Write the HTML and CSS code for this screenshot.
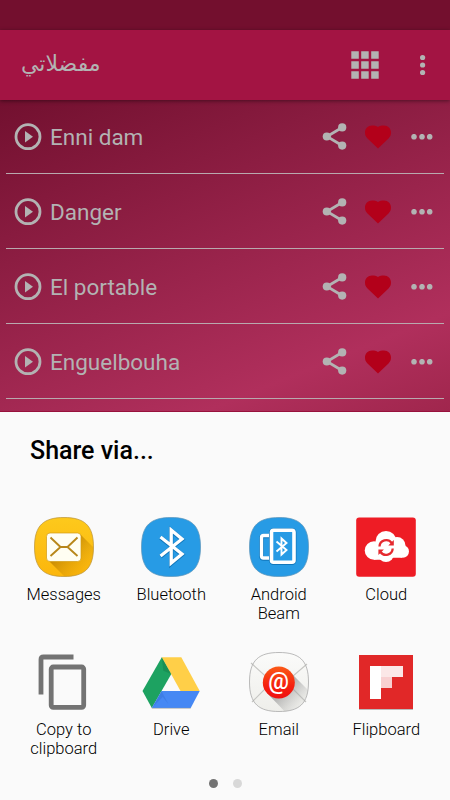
FILE: index.html
```html
<!DOCTYPE html>
<html lang="en">
<head>
<meta charset="utf-8">
<title>Share via</title>
<link rel="stylesheet" href="styles.css">
</head>
<body>
<svg class="defs" width="0" height="0" aria-hidden="true">
  <defs>
    <linearGradient id="yellow" x2="0" y2="1"><stop stop-color="#fdc91c"/><stop offset="1" stop-color="#fcb60c"/></linearGradient>
    <linearGradient id="shade" gradientUnits="userSpaceOnUse" x1="30" y1="30" x2="52" y2="52"><stop stop-color="#b57a00" stop-opacity=".75"/><stop offset="1" stop-color="#d99500" stop-opacity=".1"/></linearGradient>
    <linearGradient id="grey" gradientUnits="userSpaceOnUse" x1="34" y1="34" x2="52" y2="52"><stop stop-color="#888" stop-opacity=".7"/><stop offset="1" stop-color="#aaa" stop-opacity=".08"/></linearGradient>
    <linearGradient id="orange" x2="0" y2="1"><stop stop-color="#fb5a17"/><stop offset=".6" stop-color="#f5200f"/><stop offset="1" stop-color="#f01010"/></linearGradient>
    <linearGradient id="paper" x2="0" y2="1"><stop stop-color="#fbfbfa"/><stop offset="1" stop-color="#eeeeea"/></linearGradient>
    <path id="tile" d="M30 .5C50 .5 59.5 8 59.5 30S50 59.5 30 59.5 .5 52 .5 30 10 .5 30 .5z"/>
    <clipPath id="tileclip"><use href="#tile"/></clipPath>
    <symbol id="play" viewBox="0 0 28 28"><circle cx="14" cy="13.700" r="12" fill="none" stroke="currentColor" stroke-width="2.800"/><path d="M11 7.900v11.600l8-5.800z" fill="currentColor"/></symbol>
    <symbol id="share" viewBox="0 0 26 28"><path d="M20 4.500 5 13.500l15 9" fill="none" stroke="currentColor" stroke-width="2.700"/><circle cx="20.200" cy="4.400" r="4.100" fill="currentColor"/><circle cx="4.800" cy="13.500" r="4.100" fill="currentColor"/><circle cx="20.200" cy="22.600" r="4.100" fill="currentColor"/></symbol>
    <symbol id="heart" viewBox="0 0 26 24"><path d="M13 23.600 2.500 13.600C.7 11.600 0 9.800 0 7.500 0 3.400 3 .5 7 .5c2.400 0 4.400.3 6 1.400C14.600.8 16.600.5 19 .5c4 0 7 2.900 7 7 0 2.300-.7 4.100-2.500 6.100z" fill="#b3001a"/></symbol>
    <symbol id="more" viewBox="0 0 22 6"><circle cx="3" cy="2.700" r="2.800" fill="currentColor"/><circle cx="11" cy="2.700" r="2.800" fill="currentColor"/><circle cx="18.700" cy="2.700" r="2.800" fill="currentColor"/></symbol>
  </defs>
</svg>
<div class="status"></div>
<header class="bar">
  <h1 class="title" dir="rtl" lang="ar">مفضلاتي</h1>
  <svg class="apps" viewBox="0 0 28 28"><path d="M.3.3h7.500v7.500H.3zM10.200.3h7.500v7.500h-7.500zM20.200.3h7.500v7.500h-7.500zM.3 10.200h7.500v7.500H.3zM10.200 10.200h7.500v7.500h-7.500zM20.200 10.200h7.500v7.500h-7.500zM.3 20.200h7.500v7.500H.3zM10.200 20.200h7.500v7.500h-7.500zM20.200 20.200h7.500v7.500h-7.500z" fill="currentColor"/></svg>
  <svg class="menu" viewBox="0 0 6 22"><circle cx="2.600" cy="3.500" r="2.600" fill="currentColor"/><circle cx="2.600" cy="11" r="2.600" fill="currentColor"/><circle cx="2.600" cy="18.500" r="2.600" fill="currentColor"/></svg>
</header>
<main class="songs">
  <div class="song"><svg class="play"><use href="#play"/></svg><span class="name">Enni dam</span><svg class="share"><use href="#share"/></svg><svg class="heart"><use href="#heart"/></svg><svg class="more"><use href="#more"/></svg></div>
  <div class="song"><svg class="play"><use href="#play"/></svg><span class="name">Danger</span><svg class="share"><use href="#share"/></svg><svg class="heart"><use href="#heart"/></svg><svg class="more"><use href="#more"/></svg></div>
  <div class="song"><svg class="play"><use href="#play"/></svg><span class="name">El portable</span><svg class="share"><use href="#share"/></svg><svg class="heart"><use href="#heart"/></svg><svg class="more"><use href="#more"/></svg></div>
  <div class="song"><svg class="play"><use href="#play"/></svg><span class="name">Enguelbouha</span><svg class="share"><use href="#share"/></svg><svg class="heart"><use href="#heart"/></svg><svg class="more"><use href="#more"/></svg></div>
</main>
<section class="sheet">
  <h2 class="heading">Share via...</h2>
  <div class="targets">
    <div class="target">
      <svg class="icon" viewBox="0 0 60 60">
        <use href="#tile" fill="url(#yellow)"/>
        <path clip-path="url(#tileclip)" d="M46 17 64 35v30H36L14 43z" fill="url(#shade)"/>
        <use href="#tile" fill="none" stroke="#b9923a" stroke-width=".7"/>
        <rect x="12.500" y="16" width="34.500" height="28.500" rx="3.500" fill="#fffef2" stroke="#d29b13" stroke-width=".7"/>
        <path d="M16.500 20.500 26.500 30h7l10-9.500M26.500 30l-10 9M33.500 30l10 9" fill="none" stroke="#b8871a" stroke-width="1.900"/>
      </svg>
      <span class="label">Messages</span>
    </div>
    <div class="target">
      <svg class="icon" viewBox="0 0 60 60">
        <use href="#tile" fill="#279be5" stroke="#5b93b8" stroke-width=".7"/>
        <path d="M19.500 20.500 41 37.500 30.200 46.500v-33L41 22.500 19.500 39.500" fill="none" stroke="#1277bb" stroke-width="4.400"/>
        <path d="M19.500 20 41 37 30.200 46v-33L41 22 19.500 39" fill="none" stroke="#fff" stroke-width="3.300"/>
      </svg>
      <span class="label">Bluetooth</span>
    </div>
    <div class="target">
      <svg class="icon" viewBox="0 0 60 60">
        <use href="#tile" fill="#279be5" stroke="#5b93b8" stroke-width=".7"/>
        <path d="M21 19h-6.500q-2 0-2 2v18.500q0 2 2 2H21" fill="none" stroke="#1277bb" stroke-width="4.500"/>
        <path d="M21 18.500h-6.500q-2 0-2 2V39q0 2 2 2H21" fill="none" stroke="#fff" stroke-width="3.300"/>
        <rect x="22.500" y="13.500" width="22.500" height="32" rx="2" fill="#279be5" stroke="#1277bb" stroke-width="5"/>
        <rect x="22.500" y="13.300" width="22.500" height="32" rx="2" fill="#279be5" stroke="#fff" stroke-width="3.600"/>
        <path d="m27.500 24.500 10 8.500-5 4.500V21.500l5 4.500-10 8.500" fill="none" stroke="#fff" stroke-width="1.900"/>
      </svg>
      <span class="label">Android<br>Beam</span>
    </div>
    <div class="target">
      <svg class="icon" viewBox="0 0 60 60">
        <rect x=".2" y=".5" width="59.600" height="59.300" rx="3" fill="#ee1c25"/>
        <g fill="#fff"><circle cx="18" cy="33.500" r="9.300"/><circle cx="30" cy="24.500" r="10.500"/><circle cx="41" cy="28.500" r="8.500"/><circle cx="46.800" cy="34.500" r="6.200"/><circle cx="30" cy="37" r="8"/><path d="M18 32h28v8.700H34l-4 2.500-4-.5h-8z"/></g>
        <path d="M23.500 29.500a6.700 6.700 0 0 1 12.200-3.500M36.700 31.500a6.700 6.700 0 0 1-12.200 3.500" fill="none" stroke="#e52a30" stroke-width="2.300"/>
        <path d="m37.800 23v5.500h-5.500zM22.400 38v-5.500h5.500z" fill="#e52a30"/>
      </svg>
      <span class="label">Cloud</span>
    </div>
    <div class="target">
      <svg class="icon" viewBox="0 0 60 60">
        <path d="M7 42.500V7.500Q7 5 9.500 5H39.500" fill="none" stroke="#737373" stroke-width="4.800"/>
        <rect x="17.200" y="15" width="32.500" height="40.300" rx="2" fill="none" stroke="#737373" stroke-width="4.800"/>
      </svg>
      <span class="label">Copy to<br>clipboard</span>
    </div>
    <div class="target">
      <svg class="icon" viewBox="0 0 60 60">
        <path d="M20.800 5.300 1.500 39l9.300 17 19.500-34z" fill="#1da261"/>
        <path d="M20.800 5.300h19.500L58.700 39H39.500z" fill="#ffcf48"/>
        <path d="M20.500 39h38.200l-9 17H10.800z" fill="#4688f4"/>
        <path d="m20.800 5.300 1.500 13.500 8 3.200z" fill="#15824d" opacity=".55"/>
        <path d="m20.500 39-9.700 17 11-11 5.500 7z" fill="#2a65c8" opacity=".3"/>
        <path d="M10.800 56.300h38.900" stroke="#999" stroke-width=".6"/>
      </svg>
      <span class="label">Drive</span>
    </div>
    <div class="target">
      <svg class="icon" viewBox="0 0 60 60">
        <use href="#tile" fill="url(#paper)"/>
        <path d="m2 11 21 19L3 50M58 12 37 30l20 20" fill="none" stroke="#c5c5c2" stroke-width="1.100"/>
        <path clip-path="url(#tileclip)" d="m41 20 24 24v22H42L18 41z" fill="url(#grey)"/>
        <use href="#tile" fill="none" stroke="#aaa" stroke-width=".8"/>
        <circle cx="29.800" cy="30.500" r="16" fill="url(#orange)"/>
        <text class="at" x="29.500" y="37">@</text>
      </svg>
      <span class="label">Email</span>
    </div>
    <div class="target">
      <svg class="icon" viewBox="0 0 60 60">
        <path d="M3 3.200h54V58H3z" fill="#bbb"/>
        <path d="M3 3h54v54H3z" fill="#e12828"/>
        <path d="M14 14h11v33H14z" fill="#fff"/><path d="M25 14h22v11H25z" fill="#fbe7e7"/><path d="M25 25h11v11H25z" fill="#f8d0d1"/>
      </svg>
      <span class="label">Flipboard</span>
    </div>
  </div>
  <div class="pages"><i class="dot current"></i><i class="dot"></i></div>
</section>
</body>
</html>
```

FILE: styles.css
```css
* { box-sizing: border-box; }
body {
  margin: 0;
  width: 450px;
  height: 800px;
  overflow: hidden;
  display: flex;
  flex-direction: column;
  font-family: Roboto, "Liberation Sans", sans-serif;
  color: #b3b3b3;
  background: #fafafa;
}
svg { display: block; flex: none; }
.defs { position: absolute; }
.status { height: 30px; background: #730f2e; }
.bar {
  position: relative;
  height: 70px;
  display: flex;
  align-items: center;
  padding: 0 24px 0 21px;
  background: #a31443;
  box-shadow: 0 1px 4px rgba(0, 0, 0, .45);
}
.title {
  margin: 0 auto 0 0;
  padding-bottom: 2px;
  font: 400 22px/30px "DejaVu Sans", "Noto Sans", sans-serif;
}
.apps { width: 28px; height: 28px; margin-right: 41px; }
.menu { width: 6px; height: 22px; }
.songs {
  height: 312px;
  padding: 0 6px;
  background: linear-gradient(158deg, #72102f 0%, #b02f5c 80%, #a0264d 100%);
  border-bottom: 1px solid #98113c;
}
.song {
  height: 75px;
  display: flex;
  align-items: center;
  padding: 0 11px 0 8px;
  border-bottom: 1px solid #b9a9ae;
}
.song:first-child { height: 74px; }
.song:not(:first-child) { padding-top: 1px; }
.play { width: 28px; height: 28px; }
.name { margin: 0 auto 0 8px; padding-top: 1px; font-size: 22.500px; line-height: 27px; }
.share { width: 26px; height: 28px; margin-right: 17px; }
.heart { width: 26px; height: 24px; margin-right: 20px; }
.more { width: 22px; height: 6px; }
.sheet {
  height: 388px;
  background: #fafafa;
  color: #111;
}
.heading {
  margin: 0;
  padding: 24px 30px 0;
  font-size: 25px;
  font-weight: 500;
  line-height: 30px;
  color: #000;
}
.targets {
  margin-top: 51px;
  padding: 0 10px;
  display: grid;
  grid-template-columns: repeat(4, 1fr);
  grid-auto-rows: 135px;
}
.target { display: flex; flex-direction: column; align-items: center; }
.icon { width: 60px; height: 60px; }
.label {
  margin-top: 8px;
  font-size: 16.500px;
  font-weight: 350;
  line-height: 19px;
  text-align: center;
  color: #000;
}
.at { font: 500 23px Roboto, sans-serif; fill: #fff; text-anchor: middle; }
.pages { display: flex; justify-content: center; gap: 15px; margin-top: -8px; }
.dot { width: 9px; height: 9px; border-radius: 50%; background: #d8d8d8; }
.dot.current { background: #737373; }
```
